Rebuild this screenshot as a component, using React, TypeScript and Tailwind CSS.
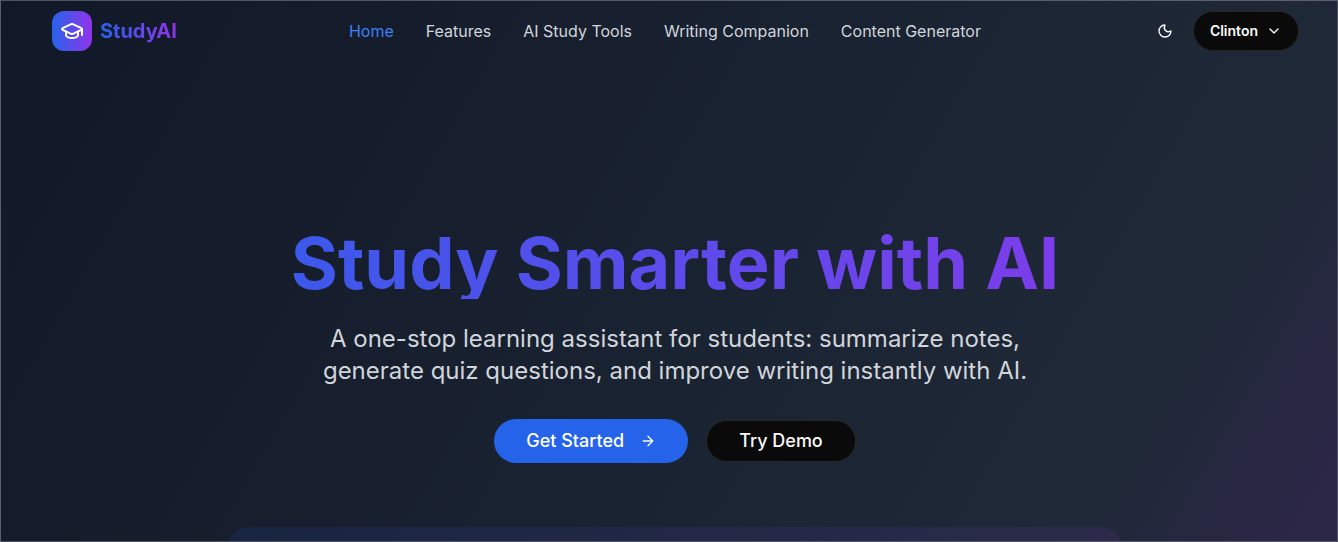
import { ArrowRight, ChevronDown, GraduationCap, Moon } from "lucide-react";

const links = ["Home", "Features", "AI Study Tools", "Writing Companion", "Content Generator"];

function Header() {
  return (
    <header className="flex h-15 items-center justify-between pr-[38px] pl-[51px]">
      <a href="#" className="flex items-center gap-2">
        <span className="flex size-10 items-center justify-center rounded-xl bg-[linear-gradient(to_right,#2563eb,#9333ea)] text-white">
          <GraduationCap size={24} aria-hidden="true" />
        </span>
        <span className="bg-[linear-gradient(to_right,#2563eb,#9333ea)] bg-clip-text text-xl font-bold text-transparent">
          StudyAI
        </span>
      </a>
      <nav className="flex items-center gap-8 text-base">
        {links.map((label, i) => (
          <a key={label} href="#" className={i === 0 ? "text-[#3b82f6]" : "text-[#d1d5db]"}>
            {label}
          </a>
        ))}
      </nav>
      <div className="flex items-center gap-4">
        <button aria-label="Toggle theme" className="flex size-6 items-center justify-center text-white">
          <Moon size={16} aria-hidden="true" />
        </button>
        <button className="flex h-10 items-center gap-2 rounded-full border border-[#262626] bg-[#0a0a0a] px-4 text-sm font-semibold text-neutral-50">
          Clinton
          <ChevronDown size={16} aria-hidden="true" />
        </button>
      </div>
    </header>
  );
}

function Hero() {
  return (
    <main className="flex flex-col items-center pt-[166px] pl-3 text-center">
      <h1 className="w-full bg-[linear-gradient(to_right,#2563eb,#9333ea)] bg-clip-text text-7xl leading-none font-bold text-transparent">
        Study Smarter with AI
      </h1>
      <p className="mt-6 max-w-3xl text-2xl leading-8 text-[#d1d5db]">
        A one-stop learning assistant for students: summarize notes, generate quiz questions, and improve writing
        instantly with AI.
      </p>
      <div className="mt-8 flex items-center justify-center gap-[18px]">
        <button className="flex h-11 items-center gap-4 rounded-full bg-[#2563eb] px-8 text-lg font-medium text-white">
          Get Started
          <ArrowRight size={16} aria-hidden="true" />
        </button>
        <button className="flex h-[42px] items-center rounded-full border border-[#262626] bg-[#0a0a0a] px-8 text-lg font-medium text-neutral-50">
          Try Demo
        </button>
      </div>
      <section
        aria-label="Preview"
        className="mt-16 h-96 w-full max-w-4xl rounded-3xl bg-[linear-gradient(to_right,#2563eb1a,#9333ea1a)]"
      />
    </main>
  );
}

export default function App() {
  return (
    <div className="h-screen overflow-hidden border border-white/25 bg-[linear-gradient(120deg,#111827_0%,#1f2937_84%,#2c2647_97%)] font-[Inter,sans-serif]">
      <Header />
      <Hero />
    </div>
  );
}
